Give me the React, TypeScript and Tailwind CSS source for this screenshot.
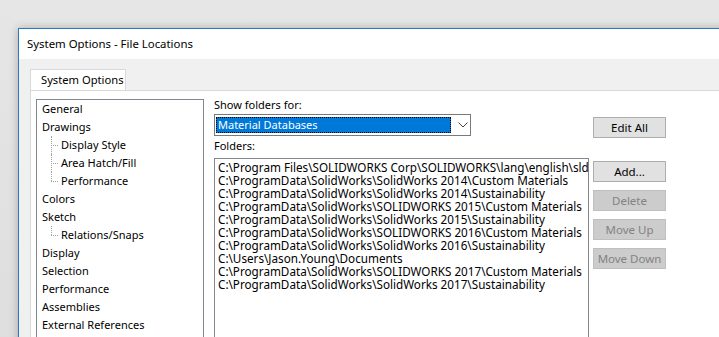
const font = { fontFamily: '"Segoe UI", "Noto Sans", "Liberation Sans", sans-serif' }

type TreeItem = { label: string; child?: boolean; last?: boolean }

const tree: TreeItem[] = [
  { label: "General" },
  { label: "Drawings" },
  { label: "Display Style", child: true },
  { label: "Area Hatch/Fill", child: true },
  { label: "Performance", child: true, last: true },
  { label: "Colors" },
  { label: "Sketch" },
  { label: "Relations/Snaps", child: true, last: true },
  { label: "Display" },
  { label: "Selection" },
  { label: "Performance" },
  { label: "Assemblies" },
  { label: "External References" },
  { label: "Default Templates" },
]

const folders = [
  "C:\\Program Files\\SOLIDWORKS Corp\\SOLIDWORKS\\lang\\english\\sldmaterials",
  "C:\\ProgramData\\SolidWorks\\SolidWorks 2014\\Custom Materials",
  "C:\\ProgramData\\SolidWorks\\SolidWorks 2014\\Sustainability",
  "C:\\ProgramData\\SolidWorks\\SOLIDWORKS 2015\\Custom Materials",
  "C:\\ProgramData\\SolidWorks\\SolidWorks 2015\\Sustainability",
  "C:\\ProgramData\\SolidWorks\\SOLIDWORKS 2016\\Custom Materials",
  "C:\\ProgramData\\SolidWorks\\SolidWorks 2016\\Sustainability",
  "C:\\Users\\Jason.Young\\Documents",
  "C:\\ProgramData\\SolidWorks\\SOLIDWORKS 2017\\Custom Materials",
  "C:\\ProgramData\\SolidWorks\\SolidWorks 2017\\Sustainability",
]

const TreeRow = ({ item }: { item: TreeItem }) => {
  if (!item.child) {
    return <div className="h-[18px] leading-[18px] pl-[5px] whitespace-nowrap">{item.label}</div>
  }
  return (
    <div className="h-[18px] leading-[18px] flex whitespace-nowrap">
      <div className="relative w-[24px] shrink-0">
        <div
          className={`absolute left-[14px] top-0 border-l border-dotted border-[#a0a0a0] ${item.last ? "h-[9px]" : "h-[18px]"}`}
        />
        <div className="absolute left-[14px] top-[9px] w-[7px] border-t border-dotted border-[#a0a0a0]" />
      </div>
      <span>{item.label}</span>
    </div>
  )
}

const Button = ({ label, disabled }: { label: string; disabled?: boolean }) => (
  <div
    className={`w-[73px] h-[21px] flex items-center justify-center border whitespace-nowrap text-[11.5px] ${
      disabled ? "bg-[#cccccc] border-[#bfbfbf] text-[#838383]" : "bg-[#e1e1e1] border-[#adadad] text-black"
    }`}
  >
    {label}
  </div>
)

export default function App() {
  return (
    <div className="w-[719px] h-[337px] overflow-hidden bg-gradient-to-b from-[#e6e6e6] to-[#dedede] pt-[28px] pl-[18px]" style={font}>
      <div className="w-[720px] h-[320px] border-t border-l border-[#2b79c2] bg-white shadow-[0_0_8px_rgba(0,0,0,0.25)] text-[11px] text-black">
        <div className="h-[30px] flex items-center pl-[8px] text-[11.4px]">System Options - File Locations</div>
        <div className="bg-[#f0f0f0] h-full pt-[10px] pl-[11px]">
          <div className="w-[96px] h-[21px] bg-white border border-b-0 border-[#d9d9d9] flex items-center pl-[10px] whitespace-nowrap text-[11.2px]">
            System Options
          </div>
          <div className="bg-white border-t border-l border-[#d9d9d9] h-full flex pl-[5px] pt-[8px]">
            <div className="w-[168px] h-[260px] border border-[#828790] bg-white">
              {tree.map((t, i) => (
                <TreeRow key={i} item={t} />
              ))}
            </div>
            <div className="ml-[10px] w-[375px] -mt-[1px]">
              <div className="h-[14px] leading-[14px]">Show folders for:</div>
              <div className="mt-[2px] w-[257px] h-[22px] border border-[#7a7a7a] flex items-center pl-[1px]">
                <div className="w-[235px] h-[16px] bg-[#0078d7] border border-dotted border-[#000] text-white leading-[14px] pl-[1px]">
                  Material Databases
                </div>
                <svg width="10" height="6" viewBox="0 0 10 6" className="ml-[7px]">
                  <path d="M0.5 0.5 L5 5 L9.5 0.5" fill="none" stroke="#444" strokeWidth="1" />
                </svg>
              </div>
              <div className="h-[19px] leading-[19px]">Folders:</div>
              <div className="mt-[3px] w-[375px] h-[200px] border border-[#828790] pt-[2px] pl-[3px] overflow-hidden text-[11.7px]">
                {folders.map((f, i) => (
                  <div key={i} className="h-[13px] leading-[13px] whitespace-nowrap">
                    {f}
                  </div>
                ))}
              </div>
            </div>
            <div className="ml-[4px] pt-[18px] flex flex-col">
              <Button label="Edit All" />
              <div className="h-[23px]" />
              <div className="flex flex-col gap-[8px]">
                <Button label="Add..." />
                <Button label="Delete" disabled />
                <Button label="Move Up" disabled />
                <Button label="Move Down" disabled />
              </div>
            </div>
          </div>
        </div>
      </div>
    </div>
  )
}
